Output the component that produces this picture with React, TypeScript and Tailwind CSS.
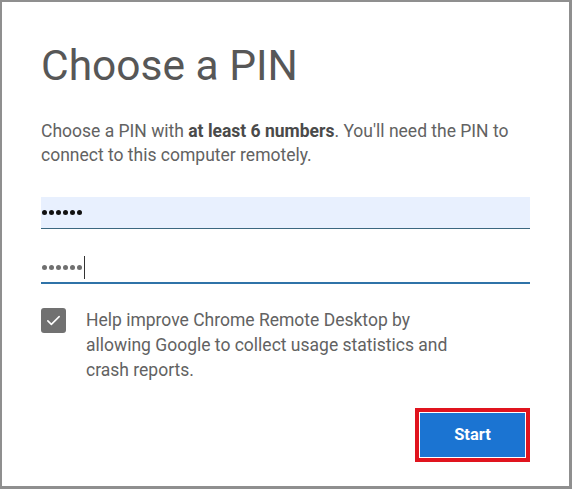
import React from 'react';

const font = { fontFamily: 'Roboto, "Liberation Sans", sans-serif' };

const Dots = ({ color }: { color: string }) => (
  <div className="flex items-center gap-[2px]">
    {[0, 1, 2, 3, 4, 5].map((i) => (
      <span key={i} className={`w-[5px] h-[5px] rounded-full ${color}`} />
    ))}
  </div>
);

const PinDialog = () => {
  return (
    <div
      className="w-[572px] h-[489px] bg-white border-t-2 border-l-2 border-r-[3px] border-b-[3px] border-[#8f8f8f] flex flex-col pl-[39px] pr-[39px]"
      style={font}
    >
      <h1 className="mt-[36px] text-[42.5px] leading-[56px] font-normal text-[#575757]">
        Choose a PIN
      </h1>

      <p className="mt-[25px] text-[17.5px] leading-[24px] text-[#626262] whitespace-nowrap">
        Choose a PIN with <span className="font-bold text-[#4a4a4a]">at least 6 numbers</span>. You'll need the PIN to
        <br />
        connect to this computer remotely.
      </p>

      <div className="mt-[30px] h-[32px] bg-[#e8f0fe] border-b border-[#3b6780] flex items-center pl-px">
        <Dots color="bg-[#111]" />
      </div>

      <div className="mt-[23px] h-[32px] border-b-2 border-[#2f73a8] flex items-center pl-px">
        <Dots color="bg-[#707070]" />
        <span className="ml-[2px] w-px h-[23px] bg-[#333]" />
      </div>

      <div className="mt-[24px] flex items-start">
        <div className="w-[25px] h-[25px] rounded-[3px] bg-[#717171] flex items-center justify-center shrink-0">
          <svg width="17" height="17" viewBox="0 0 24 24" fill="none">
            <path d="M4 12.5l5 5L20 6.5" stroke="white" strokeWidth="2.2" strokeLinecap="round" strokeLinejoin="round" />
          </svg>
        </div>
        <p className="ml-[20px] text-[17.5px] leading-[25px] text-[#626262] whitespace-nowrap">
          Help improve Chrome Remote Desktop by
          <br />
          allowing Google to collect usage statistics and
          <br />
          crash reports.
        </p>
      </div>

      <div className="mt-auto mb-[24px] flex justify-end">
        <div className="border-4 border-[#e0141e] p-px">
          <button className="w-[105px] h-[44px] bg-[#1b74d2] text-white text-[16.5px] font-bold">
            Start
          </button>
        </div>
      </div>
    </div>
  );
};

export default function App() {
  return <PinDialog />;
}
